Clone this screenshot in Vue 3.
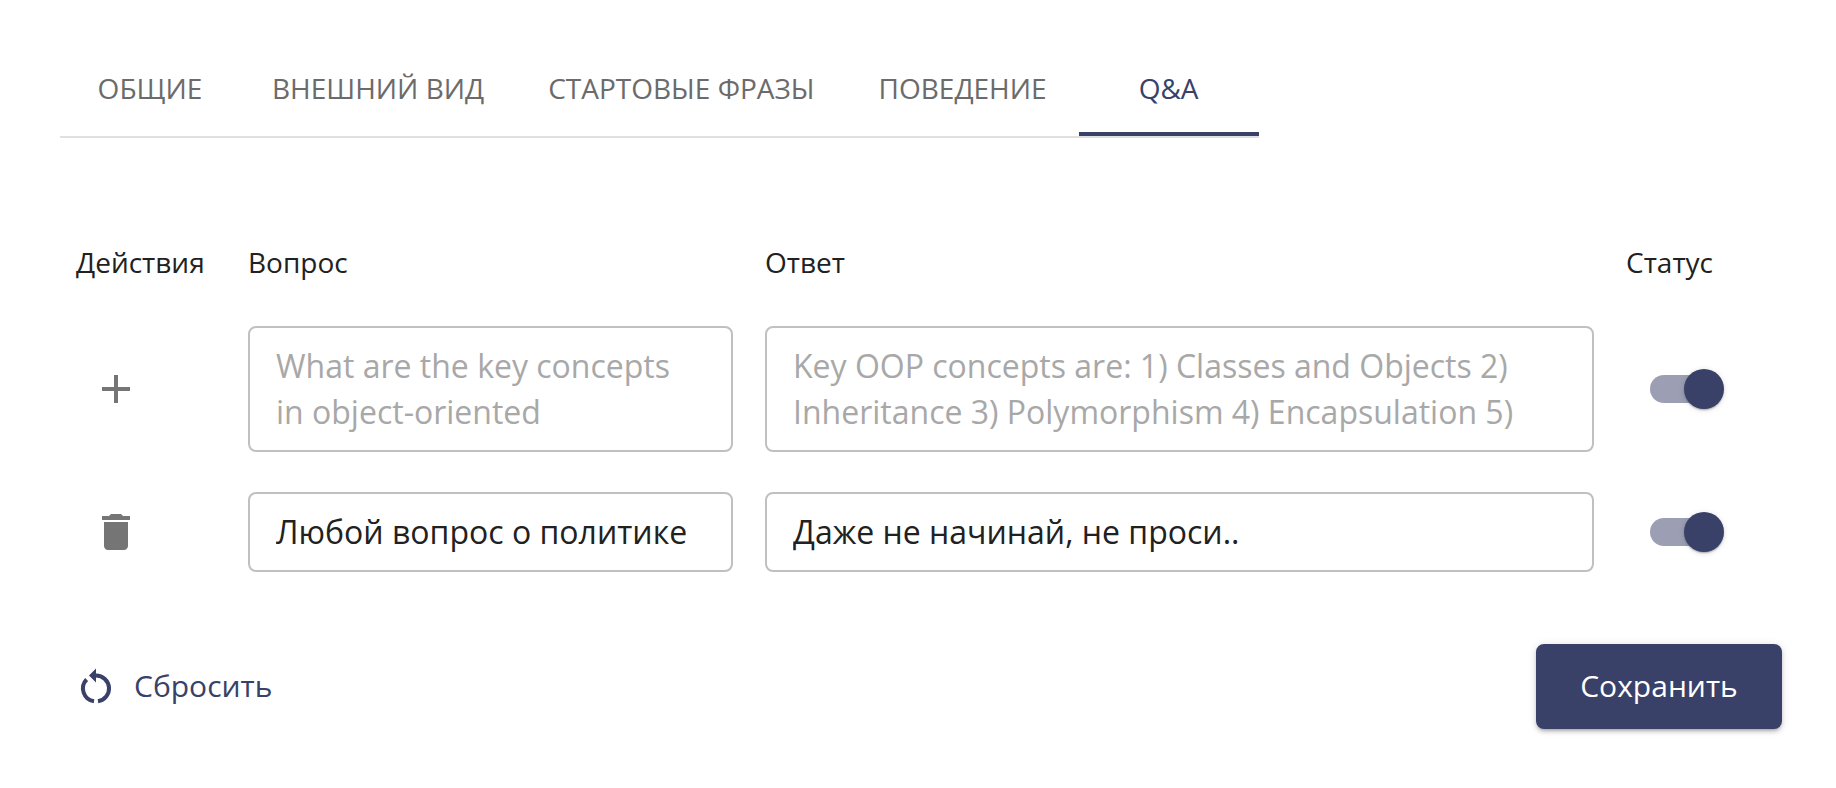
<script setup>
const tabs = ['Общие', 'Внешний вид', 'Стартовые фразы', 'Поведение', 'Q&A']
</script>

<template>
  <div class="page">
    <div class="tabs">
      <button v-for="(t, i) in tabs" :key="t" class="tab" :class="{ active: i === 4 }">{{ t }}</button>
    </div>

    <div class="grid">
      <div class="head first">Действия</div>
      <div class="head">Вопрос</div>
      <div class="head">Ответ</div>
      <div class="head">Статус</div>

      <div class="cell icon-cell">
        <svg class="icon" viewBox="0 0 24 24"><path d="M19 13h-6v6h-2v-6H5v-2h6V5h2v6h6v2z" /></svg>
      </div>
      <div class="field">
        <textarea rows="2" placeholder="What are the key concepts in object-oriented programming?"></textarea>
      </div>
      <div class="field">
        <textarea rows="2" placeholder="Key OOP concepts are: 1) Classes and Objects 2) Inheritance 3) Polymorphism 4) Encapsulation 5) Abstraction"></textarea>
      </div>
      <div class="cell"><span class="switch"><span class="track"></span><span class="thumb"></span></span></div>

      <div class="cell icon-cell">
        <svg class="icon" viewBox="0 0 24 24"><path d="M6 19c0 1.1.9 2 2 2h8c1.1 0 2-.9 2-2V7H6v12zM19 4h-3.5l-1-1h-5l-1 1H5v2h14V4z" /></svg>
      </div>
      <div class="field"><input value="Любой вопрос о политике" /></div>
      <div class="field"><input value="Даже не начинай, не проси.." /></div>
      <div class="cell"><span class="switch"><span class="track"></span><span class="thumb"></span></span></div>
    </div>

    <div class="footer">
      <button class="reset">
        <svg class="reset-icon" viewBox="0 -2.5 44 44">
          <path class="arc" d="M22 9A13 13 0 0 1 24 34.85M20 34.85A13 13 0 0 1 12.6 13" />
          <path class="head-arrow" d="M15 9L22 2V16Z" />
        </svg>
        <span>Сбросить</span>
      </button>
      <button class="save">Сохранить</button>
    </div>
  </div>
</template>

<style>
html, body { margin: 0; background: #fff; }
</style>

<style scoped>
.page {
  box-sizing: border-box;
  width: 1836px;
  height: 788px;
  padding: 46px 54px 0 60px;
  font-family: "Open Sans", "Noto Sans", sans-serif;
  color: #212121;
  overflow: hidden;
}
.tabs {
  display: inline-flex;
  vertical-align: top;
  border-bottom: 2px solid #e0e0e0;
}
.tab {
  box-sizing: border-box;
  min-width: 180px;
  height: 90px;
  padding: 0 32px 6px;
  border: 0;
  background: none;
  font: inherit;
  font-size: 28px;
  text-transform: uppercase;
  color: #6b6b6b;
}
.tab.active {
  color: #394169;
  box-shadow: inset 0 -4px 0 #394169;
}
.grid {
  display: grid;
  grid-template-columns: 156px 485px 829px 1fr;
  column-gap: 32px;
  row-gap: 40px;
  margin-top: 102px;
  align-items: center;
}
.head {
  font-size: 28px;
  line-height: 44px;
  margin-bottom: 2px;
}
.head.first { padding-left: 16px; }
.cell { display: flex; align-items: center; }
.icon-cell { padding-left: 32px; }
.icon { width: 48px; height: 48px; fill: #757575; display: block; }
.field {
  box-sizing: border-box;
  padding: 15px 26px;
  border: 2px solid #c0c0c0;
  border-radius: 8px;
}
.field textarea,
.field input {
  box-sizing: border-box;
  display: block;
  width: 100%;
  margin: 0;
  padding: 0;
  border: 0;
  font: inherit;
  font-size: 32px;
  line-height: 46px;
  color: #212121;
  background: #fff;
  outline: none;
  resize: none;
  overflow: hidden;
}
.field textarea { height: 92px; }
.field input { height: 46px; }
.field textarea::placeholder { color: #a8a8a8; opacity: 1; }
.switch {
  position: relative;
  display: block;
  width: 74px;
  height: 40px;
  margin-left: 24px;
}
.track {
  position: absolute;
  left: 0;
  top: 6px;
  width: 68px;
  height: 28px;
  border-radius: 14px;
  background: #9c9fb4;
}
.thumb {
  position: absolute;
  left: 34px;
  top: 0;
  width: 40px;
  height: 40px;
  border-radius: 50%;
  background: #394169;
  box-shadow: 0 2px 2px -1px rgba(0,0,0,.2), 0 1px 2px rgba(0,0,0,.14), 0 1px 6px rgba(0,0,0,.12);
}
.footer {
  display: flex;
  justify-content: space-between;
  align-items: center;
  margin-top: 72px;
}
.reset {
  display: flex;
  align-items: center;
  gap: 16px;
  padding: 0 0 2px 14px;
  border: 0;
  background: none;
  font: inherit;
  font-size: 30px;
  color: #394169;
}
.reset-icon { width: 44px; height: 44px; display: block; }
.arc { fill: none; stroke: #394169; stroke-width: 4; }
.head-arrow { fill: #394169; }
.save {
  width: 246px;
  height: 85px;
  padding: 0 0 2px;
  border: 0;
  border-radius: 8px;
  background: #394169;
  color: #fff;
  font: inherit;
  font-size: 30px;
  box-shadow: 0 3px 3px -2px rgba(0,0,0,.2), 0 3px 4px rgba(0,0,0,.14), 0 1px 8px rgba(0,0,0,.12);
}
</style>
